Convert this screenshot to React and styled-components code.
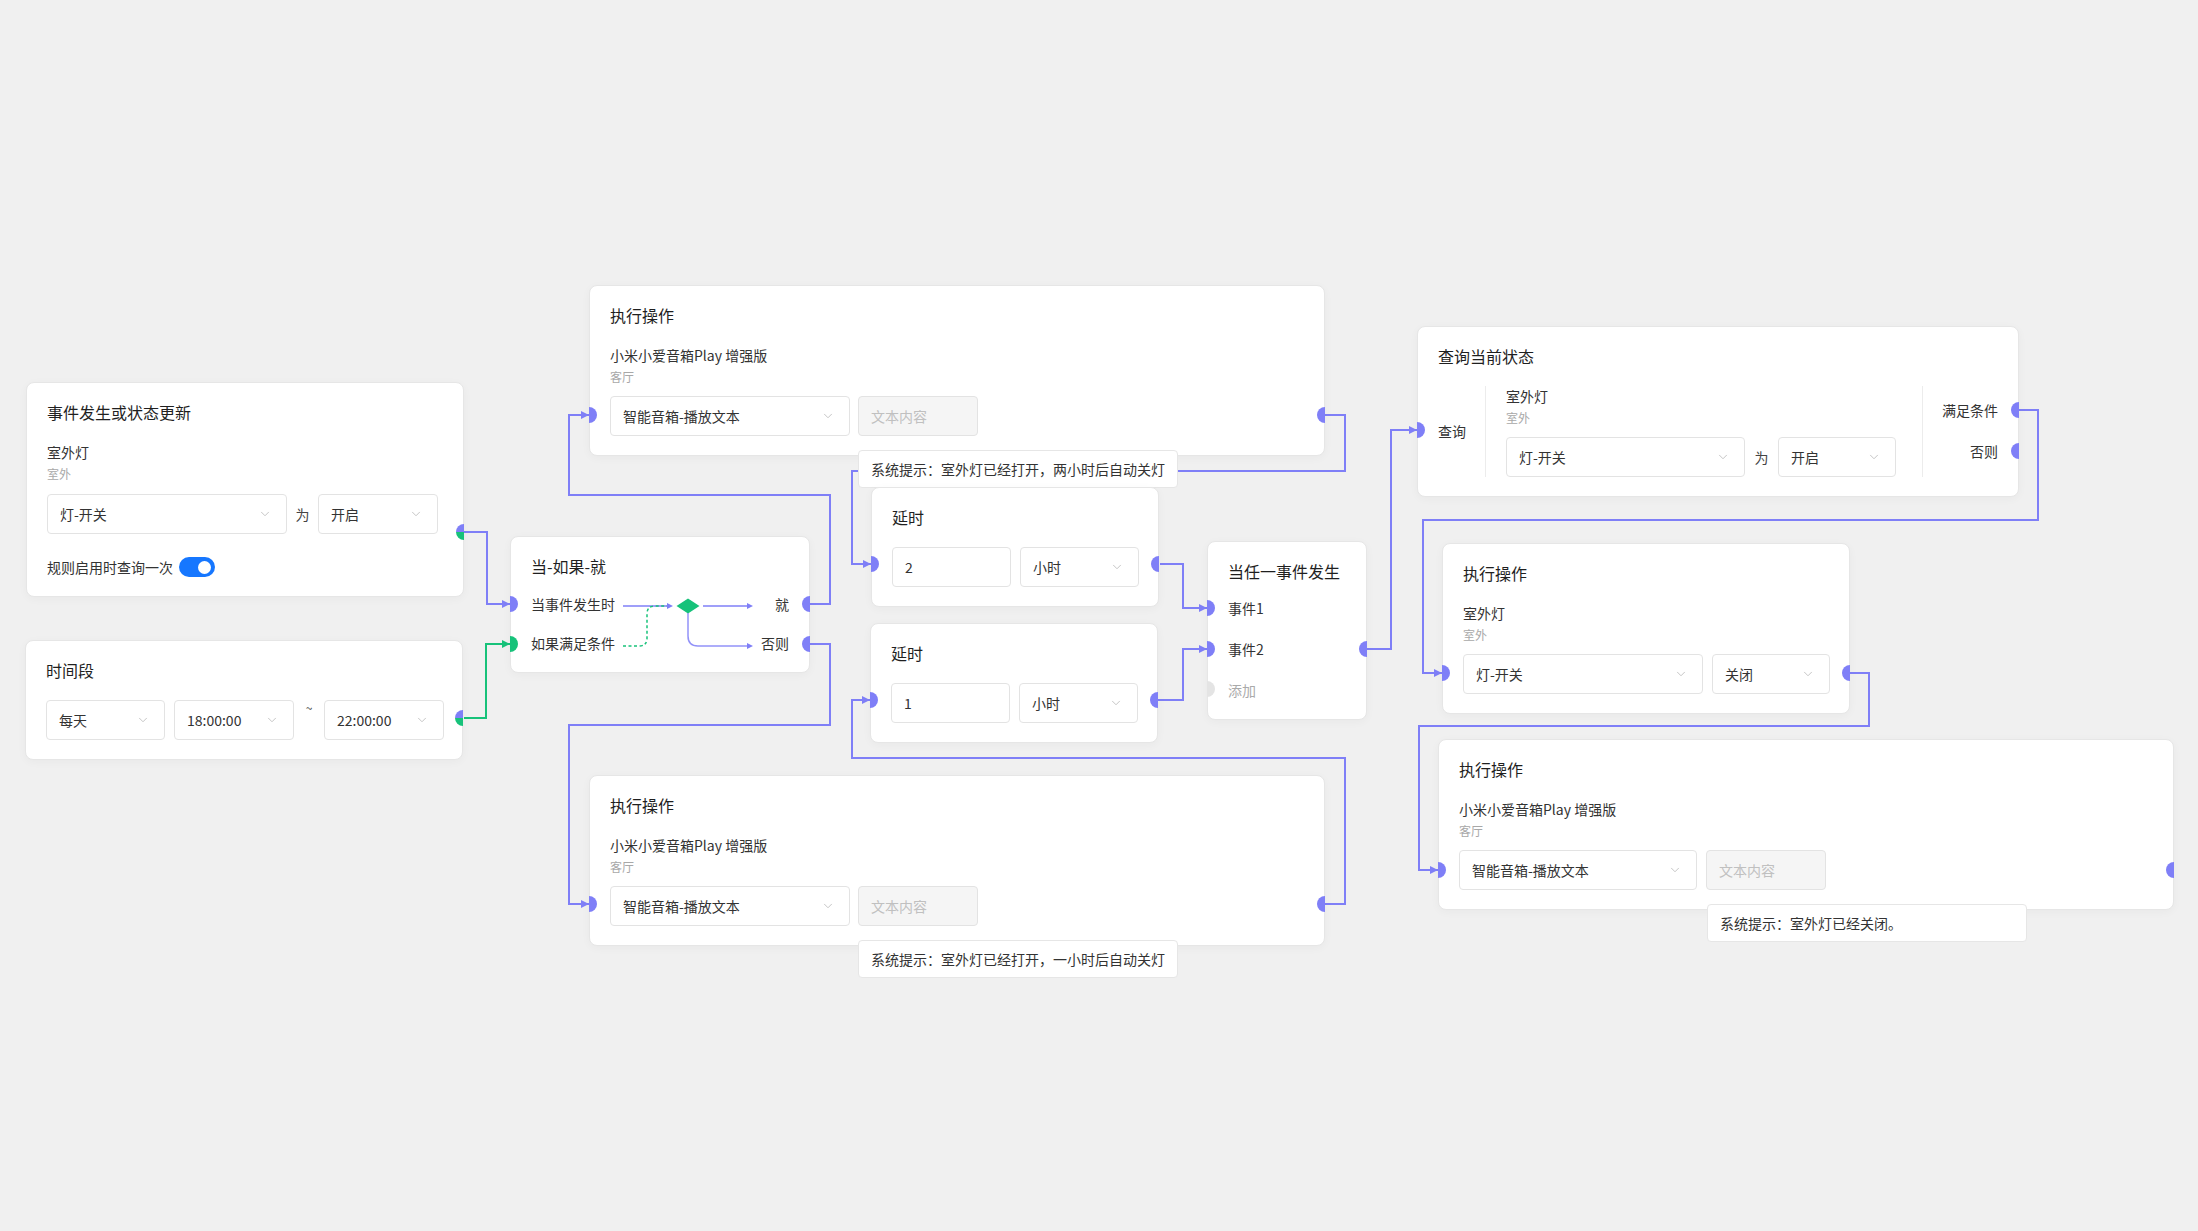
import React from 'react'
import styled, { createGlobalStyle } from 'styled-components'
import { ChevronDown } from 'lucide-react'

const PURPLE = '#7f7ff7'
const GREEN = '#17c27a'
const SPLIT = `linear-gradient(to bottom, ${PURPLE} 50%, ${GREEN} 50%)`

const Global = createGlobalStyle`
  html, body {
    margin: 0;
    padding: 0;
    background: #f0f0f0;
  }
  body {
    font-family: "Noto Sans CJK SC", "Noto Sans", sans-serif;
    color: #333;
  }
`

const Canvas = styled.div`
  position: relative;
  width: 2198px;
  height: 1231px;
  overflow: hidden;
  background: #f0f0f0;
`

const Wires = styled.svg`
  position: absolute;
  left: 0;
  top: 0;
  z-index: 0;
`

const Node = styled.div`
  position: absolute;
  z-index: 1;
  left: ${(p) => p.$x}px;
  top: ${(p) => p.$y}px;
  width: ${(p) => p.$w}px;
  box-sizing: border-box;
  padding: 19px 20px 19px 20px;
  background: #fff;
  border: 1px solid #e6e6e6;
  border-radius: 8px;
  box-shadow: 0 2px 10px rgba(0, 0, 0, 0.035);
`

const Handle = styled.span`
  position: absolute;
  top: ${(p) => p.$y - 9}px;
  width: 8px;
  height: 16px;
  background: ${(p) => p.$bg || PURPLE};
  ${(p) =>
    p.$side === 'left'
      ? 'left: -1px; border-radius: 0 8px 8px 0;'
      : 'right: -1px; border-radius: 8px 0 0 8px;'}
`

const Title = styled.div`
  font-size: 16px;
  line-height: 20px;
  color: #1f1f1f;
`

const DeviceName = styled.div`
  margin-top: ${(p) => (p.$mt === undefined ? 20 : p.$mt)}px;
  font-size: 14px;
  line-height: 20px;
  color: #333;
`

const DeviceRoom = styled.div`
  margin-top: 4px;
  font-size: 12px;
  line-height: 16px;
  color: #a8a8a8;
`

const FieldRow = styled.div`
  display: flex;
  align-items: center;
  margin-top: ${(p) => p.$mt}px;
`

const SelectBox = styled.div`
  width: ${(p) => p.$w}px;
  height: 40px;
  box-sizing: border-box;
  flex-shrink: 0;
  display: flex;
  align-items: center;
  justify-content: space-between;
  padding: 0 14px 0 12px;
  border: 1px solid #e3e3e3;
  border-radius: 4px;
  background: #fff;
  font-size: 14px;
  color: #333;
  svg {
    color: #bdbdbd;
  }
`

const InputBox = styled.div`
  width: ${(p) => p.$w}px;
  height: 40px;
  box-sizing: border-box;
  flex-shrink: 0;
  display: flex;
  align-items: center;
  padding: 0 12px;
  margin-left: ${(p) => p.$ml || 0}px;
  border: 1px solid #e3e3e3;
  border-radius: 4px;
  font-size: 14px;
  background: ${(p) => (p.$muted ? '#f5f5f5' : '#fff')};
  color: ${(p) => (p.$muted ? '#c0c0c0' : '#333')};
`

const Joiner = styled.span`
  width: ${(p) => p.$w}px;
  flex-shrink: 0;
  text-align: center;
  font-size: ${(p) => (p.$small ? 12 : 14)}px;
  color: #444;
  align-self: ${(p) => (p.$small ? 'flex-start' : 'center')};
  line-height: ${(p) => (p.$small ? '16px' : '20px')};
`

const ToggleRow = styled.div`
  display: flex;
  align-items: center;
  gap: 6px;
  margin-top: 23px;
  font-size: 14px;
  line-height: 20px;
`

const Toggle = styled.span`
  position: relative;
  width: 36px;
  height: 20px;
  border-radius: 10px;
  background: #1677ff;
  &::after {
    content: '';
    position: absolute;
    right: 4px;
    top: 3.5px;
    width: 13px;
    height: 13px;
    border-radius: 50%;
    background: #fff;
  }
`

const Tip = styled.div`
  position: absolute;
  left: 268px;
  top: 164px;
  width: 320px;
  height: 38px;
  box-sizing: border-box;
  display: flex;
  align-items: center;
  padding: 0 12px;
  background: #fff;
  border: 1px solid #e6e6e6;
  border-radius: 4px;
  font-size: 14px;
  color: #333;
  white-space: nowrap;
`

const PortList = styled.div`
  display: flex;
  flex-direction: column;
  align-items: ${(p) => (p.$right ? 'flex-end' : 'flex-start')};
  gap: ${(p) => p.$gap}px;
  margin-top: ${(p) => p.$mt || 0}px;
  padding-top: ${(p) => p.$pt || 0}px;
`

const PortLabel = styled.div`
  font-size: 14px;
  line-height: 20px;
  white-space: nowrap;
  color: ${(p) => (p.$muted ? '#aaa' : '#333')};
`

const SplitBody = styled.div`
  display: flex;
  margin-top: 18px;
  height: 59px;
`

const FlowSvg = styled.svg`
  flex: 1;
  display: block;
`

const QueryBody = styled.div`
  display: flex;
  margin-top: 20px;
  height: 91px;
`

const QueryLead = styled.div`
  width: 48px;
  flex-shrink: 0;
  display: flex;
  align-items: center;
  border-right: 1px solid #ececec;
  font-size: 14px;
  padding-bottom: 2px;
  box-sizing: border-box;
`

const QueryMain = styled.div`
  padding: 0 26px 0 20px;
  border-right: 1px solid #ececec;
`

const QueryOut = styled.div`
  flex: 1;
`

const Select = ({ w, children }) => (
  <SelectBox $w={w}>
    <span>{children}</span>
    <ChevronDown size={14} strokeWidth={1.5} />
  </SelectBox>
)

const ActionNode = ({ x, y, hy, name, room, children, tip }) => (
  <Node $x={x} $y={y} $w={736}>
    <Handle $side="left" $y={hy} />
    <Handle $side="right" $y={hy} />
    <Title>执行操作</Title>
    <DeviceName>{name}</DeviceName>
    <DeviceRoom>{room}</DeviceRoom>
    <FieldRow $mt={11}>{children}</FieldRow>
    {tip && <Tip>{tip}</Tip>}
  </Node>
)

const DelayNode = ({ x, y, value }) => (
  <Node $x={x} $y={y} $w={288}>
    <Handle $side="left" $y={77} />
    <Handle $side="right" $y={77} />
    <Title>延时</Title>
    <FieldRow $mt={20}>
      <InputBox $w={119}>{value}</InputBox>
      <Joiner $w={9} />
      <Select w={119}>小时</Select>
    </FieldRow>
  </Node>
)

const wires = [
  { c: GREEN, pts: [[464, 718], [486, 718], [486, 644], [510, 644]] },
  { c: PURPLE, pts: [[464, 532], [487, 532], [487, 604], [510, 604]] },
  { c: PURPLE, pts: [[810, 604], [830, 604], [830, 495], [569, 495], [569, 415], [589, 415]] },
  { c: PURPLE, pts: [[810, 644], [830, 644], [830, 725], [569, 725], [569, 904], [589, 904]] },
  { c: PURPLE, pts: [[1325, 415], [1345, 415], [1345, 471], [852, 471], [852, 564], [871, 564]] },
  { c: PURPLE, pts: [[1325, 904], [1345, 904], [1345, 758], [852, 758], [852, 700], [870, 700]] },
  { c: PURPLE, pts: [[1160, 564], [1183, 564], [1183, 608], [1207, 608]] },
  { c: PURPLE, pts: [[1158, 700], [1183, 700], [1183, 649], [1207, 649]] },
  { c: PURPLE, pts: [[1367, 649], [1391, 649], [1391, 430], [1417, 430]] },
  { c: PURPLE, pts: [[2019, 410], [2038, 410], [2038, 520], [1423, 520], [1423, 673], [1442, 673]] },
  { c: PURPLE, pts: [[1850, 673], [1869, 673], [1869, 726], [1419, 726], [1419, 870], [1438, 870]] },
]

const Wire = ({ c, pts }) => {
  const [ex, ey] = pts[pts.length - 1]
  const d = pts.map(([x, y], i) => `${i ? 'L' : 'M'}${x} ${y}`).join(' ')
  return (
    <g>
      <path d={d} fill="none" stroke={c} strokeWidth="2" />
      <polygon points={`${ex - 8},${ey - 4} ${ex},${ey} ${ex - 8},${ey + 4}`} fill={c} />
    </g>
  )
}

export default function App() {
  return (
    <>
      <Global />
      <Canvas>
        <Wires width="2198" height="1231">
          {wires.map((w, i) => (
            <Wire key={i} {...w} />
          ))}
        </Wires>

        <Node $x={26} $y={382} $w={438}>
          <Handle $side="right" $y={150} $bg={SPLIT} />
          <Title>事件发生或状态更新</Title>
          <DeviceName>室外灯</DeviceName>
          <DeviceRoom>室外</DeviceRoom>
          <FieldRow $mt={12}>
            <Select w={240}>灯-开关</Select>
            <Joiner $w={31}>为</Joiner>
            <Select w={120}>开启</Select>
          </FieldRow>
          <ToggleRow>
            规则启用时查询一次
            <Toggle />
          </ToggleRow>
        </Node>

        <Node $x={25} $y={640} $w={438}>
          <Handle $side="right" $y={78} $bg={SPLIT} />
          <Title>时间段</Title>
          <FieldRow $mt={20}>
            <Select w={119}>每天</Select>
            <Joiner $w={9} />
            <Select w={120}>18:00:00</Select>
            <Joiner $w={30} $small>
              ~
            </Joiner>
            <Select w={120}>22:00:00</Select>
          </FieldRow>
        </Node>

        <Node $x={510} $y={536} $w={300}>
          <Handle $side="left" $y={68} />
          <Handle $side="left" $y={108} $bg={GREEN} />
          <Handle $side="right" $y={68} />
          <Handle $side="right" $y={108} />
          <Title>当-如果-就</Title>
          <SplitBody>
            <PortList $gap={19}>
              <PortLabel>当事件发生时</PortLabel>
              <PortLabel>如果满足条件</PortLabel>
            </PortList>
            <FlowSvg viewBox="0 0 146 59" width="146" height="59">
              <path d="M8 12 H53" stroke={PURPLE} strokeWidth="1.5" fill="none" />
              <polygon points="52,9 58,12 52,15" fill={PURPLE} />
              <path d="M8 52 H24 Q32 52 32 44 V20 Q32 12 40 12 H52" stroke={GREEN} strokeWidth="1.5" strokeDasharray="3 2.5" fill="none" />
              <polygon points="61.5,12 73,4.5 84.5,12 73,19.5" fill={GREEN} />
              <path d="M88 12 H133" stroke={PURPLE} strokeWidth="1.5" fill="none" />
              <polygon points="132,9 138,12 132,15" fill={PURPLE} />
              <path d="M73 19 V42 Q73 52 83 52 H133" stroke={PURPLE} strokeWidth="1.5" fill="none" opacity="0.85" />
              <polygon points="132,49 138,52 132,55" fill={PURPLE} />
            </FlowSvg>
            <PortList $gap={19} $right>
              <PortLabel>就</PortLabel>
              <PortLabel>否则</PortLabel>
            </PortList>
          </SplitBody>
        </Node>

        <ActionNode
          x={589}
          y={285}
          hy={130}
          name="小米小爱音箱Play 增强版"
          room="客厅"
          tip="系统提示：室外灯已经打开，两小时后自动关灯"
        >
          <Select w={240}>智能音箱-播放文本</Select>
          <InputBox $w={120} $ml={8} $muted>
            文本内容
          </InputBox>
        </ActionNode>

        <DelayNode x={871} y={487} value="2" />
        <DelayNode x={870} y={623} value="1" />

        <ActionNode
          x={589}
          y={775}
          hy={129}
          name="小米小爱音箱Play 增强版"
          room="客厅"
          tip="系统提示：室外灯已经打开，一小时后自动关灯"
        >
          <Select w={240}>智能音箱-播放文本</Select>
          <InputBox $w={120} $ml={8} $muted>
            文本内容
          </InputBox>
        </ActionNode>

        <Node $x={1207} $y={541} $w={160}>
          <Handle $side="left" $y={67} />
          <Handle $side="left" $y={108} />
          <Handle $side="left" $y={148} $bg="#e4e4e4" />
          <Handle $side="right" $y={108} />
          <Title>当任一事件发生</Title>
          <PortList $gap={21} $mt={17}>
            <PortLabel>事件1</PortLabel>
            <PortLabel>事件2</PortLabel>
            <PortLabel $muted>添加</PortLabel>
          </PortList>
        </Node>

        <Node $x={1417} $y={326} $w={602}>
          <Handle $side="left" $y={104} />
          <Handle $side="right" $y={84} />
          <Handle $side="right" $y={125} />
          <Title>查询当前状态</Title>
          <QueryBody>
            <QueryLead>查询</QueryLead>
            <QueryMain>
              <DeviceName $mt={0}>室外灯</DeviceName>
              <DeviceRoom>室外</DeviceRoom>
              <FieldRow $mt={11}>
                <Select w={239}>灯-开关</Select>
                <Joiner $w={33}>为</Joiner>
                <Select w={118}>开启</Select>
              </FieldRow>
            </QueryMain>
            <QueryOut>
              <PortList $right $gap={21} $pt={14}>
                <PortLabel>满足条件</PortLabel>
                <PortLabel>否则</PortLabel>
              </PortList>
            </QueryOut>
          </QueryBody>
        </Node>

        <Node $x={1442} $y={543} $w={408}>
          <Handle $side="left" $y={130} />
          <Handle $side="right" $y={130} />
          <Title>执行操作</Title>
          <DeviceName>室外灯</DeviceName>
          <DeviceRoom>室外</DeviceRoom>
          <FieldRow $mt={11}>
            <Select w={240}>灯-开关</Select>
            <Joiner $w={9} />
            <Select w={118}>关闭</Select>
          </FieldRow>
        </Node>

        <ActionNode
          x={1438}
          y={739}
          hy={131}
          name="小米小爱音箱Play 增强版"
          room="客厅"
          tip="系统提示：室外灯已经关闭。"
        >
          <Select w={238}>智能音箱-播放文本</Select>
          <InputBox $w={120} $ml={9} $muted>
            文本内容
          </InputBox>
        </ActionNode>
      </Canvas>
    </>
  )
}
